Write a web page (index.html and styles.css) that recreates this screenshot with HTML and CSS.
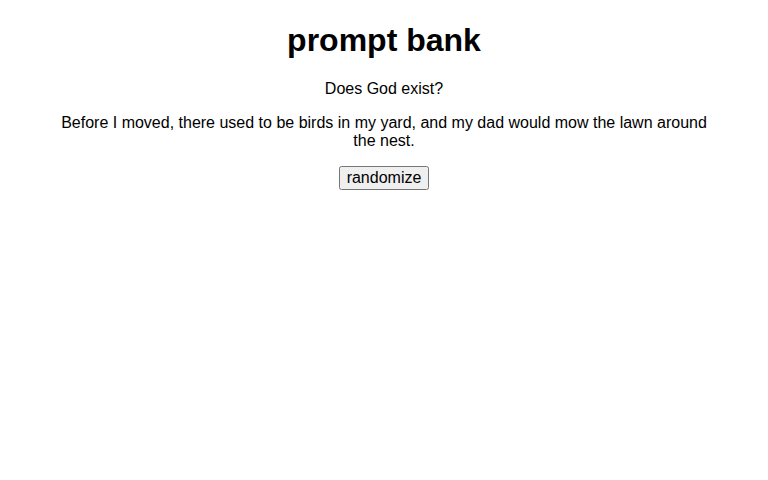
FILE: index.html
```html
<!DOCTYPE html>
<html lang="en">
<head>
    <meta charset="UTF-8">
    <meta name="viewport" content="width=device-width, initial-scale=1.0">
    <title>prompt bank</title>
    <link rel="stylesheet" href="styles.css">
</head>

<body>
    <div class="bank">
        <h1>prompt bank</h1>
        <p id="question">Does God exist?</p>
        <p id="prompt">Before I moved, there used to be birds in my yard, and my dad would mow the lawn around the nest.</p>
        <button id="randomizeBtn" type="button">randomize</button>
    </div>
</body>
</html>
```

FILE: styles.css
```css
body {
    font-family: 'Liberation Sans', Arial, sans-serif;
    color: #000;
    background-color: #fff;
    text-align: center;
}

.bank {
    max-width: 660px;
    margin: 0 auto;
}

h1 {
    margin-top: 14px;
}

button {
    font-family: 'Liberation Sans', Arial, sans-serif;
    font-size: 16px;
}
```
